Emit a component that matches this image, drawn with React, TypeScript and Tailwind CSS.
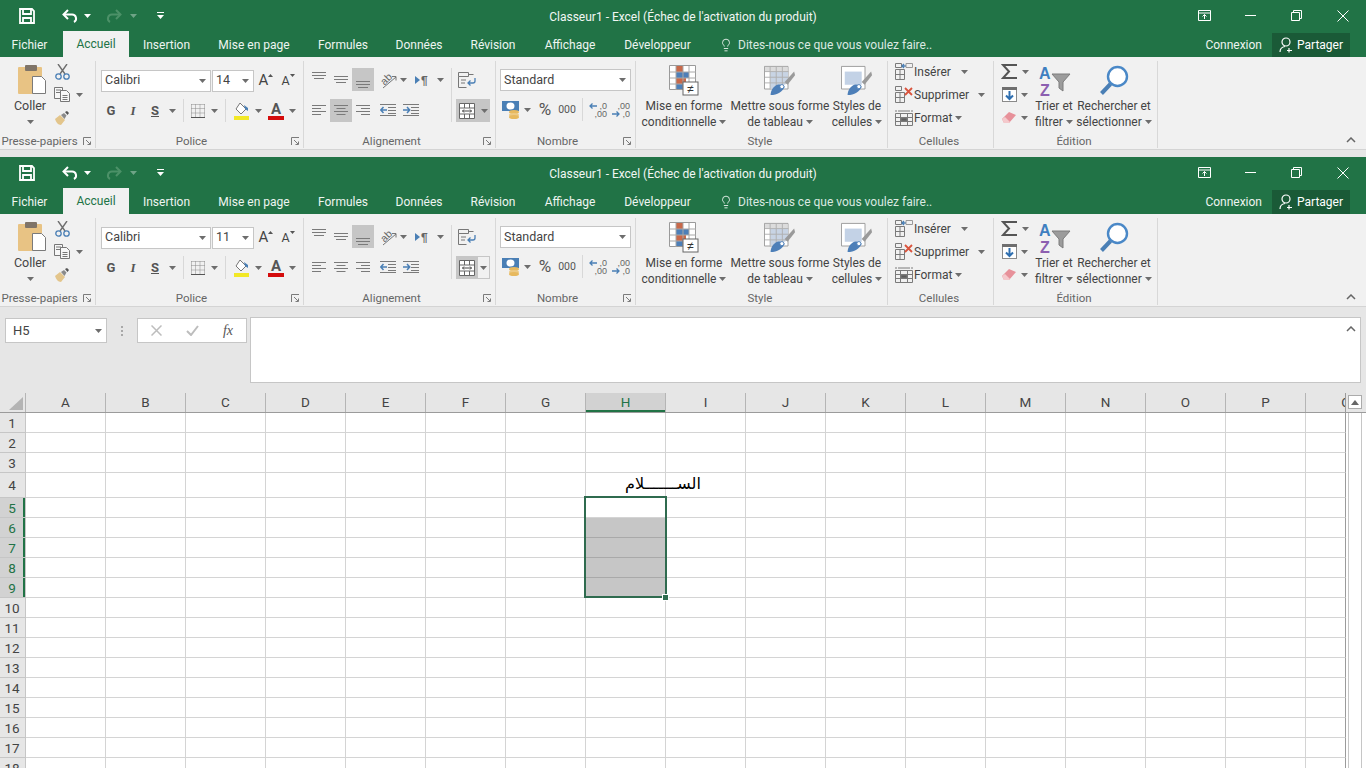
import { Lightbulb } from "lucide-react"
import type { ReactNode } from "react"

const BLUE = "#4a7fb5"

const Caret = ({ className = "" }: { className?: string }) => (
  <svg width="7" height="4" viewBox="0 0 7 4" className={`shrink-0 ${className}`}>
    <path d="M0 0h7L3.5 4z" fill="#6d6d6d" />
  </svg>
)

const WhiteCaret = ({ className = "", opacity = 1 }: { className?: string; opacity?: number }) => (
  <svg width="7" height="4" viewBox="0 0 7 4" className={className} opacity={opacity}>
    <path d="M0 0h7L3.5 4z" fill="#ffffff" />
  </svg>
)

// fixed width slot so ribbon controls line up
function Slot({ w, children, active }: { w: string; children?: ReactNode; active?: boolean }) {
  return <div className={`flex items-center justify-center h-[23px] shrink-0 ${w} ${active ? "bg-[#c6c6c6]" : ""}`}>{children}</div>
}

const Sep = ({ className = "" }: { className?: string }) => <div className={`w-px h-[23px] bg-[#d8d8d8] shrink-0 ${className}`} />

const Launcher = () => (
  <svg width="9" height="9" viewBox="0 0 9 9" className="absolute right-[3px] bottom-[2px]" fill="none" stroke="#7b7b7b">
    <path d="M.5 8V.5H8" />
    <path d="M3 3l4 4M7.5 4.5v3h-3" />
  </svg>
)

function Group({ w, label, launcher, children }: { w: string; label: string; launcher?: boolean; children: ReactNode }) {
  return (
    <div className={`relative flex flex-col h-[87px] mt-[4px] border-r border-[#d8d8d8] shrink-0 ${w}`}>
      <div className="flex-1 min-h-0">{children}</div>
      <div className={`h-[14px] leading-[14px] text-center text-[11.5px] text-[#666666] whitespace-nowrap ${launcher ? "pr-[16px]" : "pr-[3px]"}`}>{label}</div>
      {launcher && <Launcher />}
    </div>
  )
}

function Combo({ w, text, className = "" }: { w: string; text: string; className?: string }) {
  return (
    <div className={`flex items-center justify-between h-[22px] bg-white border border-[#c6c6c6] pl-[3px] pr-[4px] text-[12.5px] text-[#444444] shrink-0 ${w} ${className}`}>
      <span>{text}</span>
      <Caret />
    </div>
  )
}

function BigButton({ w, icon, line1, line2 }: { w: string; icon: ReactNode; line1: string; line2: string }) {
  return (
    <div className={`flex flex-col items-center shrink-0 text-[12px] leading-[16px] text-[#444444] whitespace-nowrap ${w}`}>
      <div className="h-[33px] mt-[4px] flex items-start justify-center">{icon}</div>
      <div>{line1}</div>
      <div className="flex items-center gap-[3px]">{line2}<Caret /></div>
    </div>
  )
}

/* ---- quick access + window icons ---- */

const SaveIcon = () => (
  <svg width="16" height="16" viewBox="0 0 16 16" fill="none" stroke="#ffffff" strokeWidth="1.8">
    <path d="M1 1h12l2 2v12H1z" />
    <path d="M4 1v5h8V1M4 15v-5h8v5" />
  </svg>
)
const UndoIcon = () => (
  <svg width="16" height="14" viewBox="0 0 16 14" fill="none" stroke="#ffffff" strokeWidth="2">
    <path d="M6 1L1.5 5.5 6 10" />
    <path d="M2 5.5h8a4 4 0 0 1 2 7.5" />
  </svg>
)
const RedoIcon = () => (
  <svg width="16" height="14" viewBox="0 0 16 14" fill="none" stroke="#4c9168" strokeWidth="2">
    <path d="M10 1l4.5 4.5L10 10" />
    <path d="M14 5.5H6a4 4 0 0 0-2 7.5" />
  </svg>
)
const CustomizeIcon = () => (
  <svg width="7" height="7" viewBox="0 0 7 7">
    <path d="M0 0h7v1H0zM0 3h7L3.500 7z" fill="#ffffff" />
  </svg>
)
const WinRibbon = () => (
  <svg width="13" height="11" viewBox="0 0 13 11" fill="none" stroke="#fff">
    <path d="M.5.500h12v10H.5zM.5 3h12" />
    <path d="M6.500 9V4.500M4.500 6.500l2-2 2 2" />
  </svg>
)
const WinRestore = () => (
  <svg width="11" height="11" viewBox="0 0 11 11" fill="none" stroke="#fff">
    <path d="M.5 2.500h8v8h-8zM2.500 2.500v-2h8v8h-2" />
  </svg>
)
const WinClose = () => (
  <svg width="12" height="12" viewBox="0 0 12 12" stroke="#fff">
    <path d="M.5.500l11 11M11.500.500l-11 11" />
  </svg>
)
const PersonIcon = () => (
  <svg width="15" height="16" viewBox="0 0 15 16" fill="none" stroke="#fff" strokeWidth="1.2">
    <circle cx="7" cy="5" r="4" />
    <path d="M1 15c0-3 2-5 5-5.500M10 11v4.500M8 13.500h5" />
  </svg>
)

/* ---- clipboard ---- */

const PasteIcon = () => (
  <svg width="30" height="30" viewBox="0 0 30 30">
    <rect x="1" y="2" width="24" height="27" rx="1" fill="#e8c384" />
    <rect x="8" y="0" width="12" height="6" rx="1" fill="#7f7468" />
    <path d="M15.500 11.500h9l4 4v13h-13z" fill="#ffffff" stroke="#7a7a7a" />
  </svg>
)
const ScissorsIcon = () => (
  <svg width="15" height="16" viewBox="0 0 15 16" fill="none">
    <path d="M3 0l7 10M12 0L5 10" stroke="#6f6f6f" strokeWidth="1.4" />
    <circle cx="3.500" cy="12.500" r="2.700" stroke={BLUE} strokeWidth="1.300" />
    <circle cx="11.500" cy="12.500" r="2.700" stroke={BLUE} strokeWidth="1.300" />
  </svg>
)
const CopyIcon = () => (
  <svg width="16" height="15" viewBox="0 0 16 15" fill="#f7f7f7" stroke="#777">
    <path d="M.5.500h8v11h-8z" />
    <path d="M6.500 3.500h6l3 3v8h-9z" />
    <path d="M2 3h5M2 5.500h4M8.500 8.500h5M8.500 10.500h5M8.500 12.500h5" fill="none" />
  </svg>
)
const BrushIcon = () => (
  <svg width="16" height="14" viewBox="0 0 16 14">
    <path d="M1 8l5-4 5 5-4 5c-3 0-5-3-6-6z" fill="#e3c58b" />
    <path d="M7 4l3-2 2.500 2.500L10.500 8z" fill="#8a8a8a" />
    <path d="M11 1l2-1 2 2-1.500 2z" fill="#555" />
  </svg>
)

/* ---- font ---- */

const BordersIcon = () => (
  <svg width="14" height="14" viewBox="0 0 14 14" fill="none" stroke="#8b8b8b" strokeDasharray="1 1">
    <path d="M.5.500h13M.5 4.500h13M.5 9h13M.5.500v13M4.500.500v13M9 .500v13M13.500.500v13" />
    <path d="M0 13.500h14" strokeDasharray="none" stroke="#555" />
  </svg>
)
const FillIcon = () => (
  <svg width="18" height="18" viewBox="0 0 18 18">
    <path d="M7 1l6 6-5 5-5-5z" fill="#fff" stroke="#777" />
    <path d="M11 3l4 3v3l-3-2z" fill={BLUE} />
    <rect x="1" y="14" width="15" height="4" fill="#f2e826" />
  </svg>
)

/* ---- alignment ---- */

const VAlign = ({ y }: { y: number }) => (
  <svg width="14" height="18" viewBox="0 0 14 18" stroke="#7a7a7a">
    <path d={`M0 ${y + 0.5}h14M0 ${y + 3.5}h14M2 ${y + 6.5}h10`} />
  </svg>
)
const HAlign = ({ a }: { a: "l" | "c" | "r" }) => {
  const d = a === "l" ? "M0 .5h14M0 3.500h9M0 6.500h14M0 9.500h9" : a === "c" ? "M0 .5h14M2.500 3.500h9M0 6.500h14M2.500 9.500h9" : "M0 .5h14M5 3.500h9M0 6.500h14M5 9.500h9"
  return (
    <svg width="14" height="10" viewBox="0 0 14 10" stroke="#7a7a7a" className="mb-[2px]">
      <path d={d} />
    </svg>
  )
}
const IndentIcon = ({ out }: { out?: boolean }) => (
  <svg width="16" height="12" viewBox="0 0 16 12" fill="none" className="mb-[2px]">
    <path d="M0 .5h16M8 3.500h8M8 6.500h8M8 9.500h8M0 11.500h16" stroke="#7a7a7a" />
    {out ? <path d="M7 6H1M3.500 3L.8 6l2.700 3" stroke={BLUE} strokeWidth="1.500" /> : <path d="M0 6h6M4 3l2.700 3L4 9" stroke={BLUE} strokeWidth="1.500" />}
  </svg>
)
const OrientIcon = () => (
  <svg width="20" height="18" viewBox="0 0 20 18" fill="none" className="overflow-visible">
    <text x="3" y="12" fontSize="10.5" fontFamily="Liberation Sans, sans-serif" fill="#666" transform="rotate(-45 8 9)">ab</text>
    <path d="M5 17L18 6M14 5.500h4v4" stroke="#777" />
  </svg>
)
const ParagraphIcon = () => (
  <svg width="18" height="12" viewBox="0 0 18 12">
    <path d="M0 2l5 4-5 4z" fill={BLUE} />
    <text x="6" y="10.500" fontSize="12" fontWeight="700" fontFamily="Liberation Sans, sans-serif" fill="#666">¶</text>
  </svg>
)
const WrapIcon = () => (
  <svg width="18" height="16" viewBox="0 0 18 16" fill="none" stroke="#777">
    <path d="M.5.500h10v4H.5zM.5 4.500v11h8M3 8h5M3 11h4M10.500 2.500h5" />
    <path d="M17 6v3a2 2 0 0 1-2 2h-5M12.500 8.500L10 11l2.500 2.500" stroke={BLUE} strokeWidth="1.300" />
  </svg>
)
const MergeIcon = () => (
  <svg width="16" height="16" viewBox="0 0 16 16" fill="#ffffff" stroke="#666">
    <path d="M.5.500h15v15H.5z" />
    <path d="M.5 5h15M.5 11h15M5.500.500V5M10.500.500V5M5.500 11v4.500M10.500 11v4.500" />
    <path d="M3.500 8h9M5 6.500L3.500 8 5 9.500M11 6.500L12.500 8 11 9.500" fill="none" stroke="#444" />
  </svg>
)

/* ---- number ---- */

const AccountingIcon = () => (
  <svg width="20" height="18" viewBox="0 0 20 18">
    <rect x="0" y="0" width="17" height="10" fill={BLUE} />
    <ellipse cx="8.500" cy="5" rx="4" ry="3.500" fill="#fff" />
    <ellipse cx="12" cy="11" rx="5" ry="2" fill="#e7b95e" />
    <ellipse cx="12" cy="14" rx="5" ry="2" fill="#edca85" />
    <ellipse cx="12" cy="16" rx="5" ry="2" fill="#e7b95e" />
  </svg>
)
const DecimalLines = ({ top, bottom }: { top: string; bottom: string }) => (
  <div className="flex flex-col items-end font-['Liberation_Sans',sans-serif] text-[9px] leading-[8px] text-[#666666]">
    <span>{top}</span>
    <span>{bottom}</span>
  </div>
)
const DecimalIcon = ({ more }: { more?: boolean }) => (
  <div className="relative flex justify-end w-[18px]">
    {more ? <DecimalLines top=",00" bottom=",0" /> : <DecimalLines top=",0" bottom=",00" />}
    <svg width="8" height="6" viewBox="0 0 8 6" fill="none" stroke={BLUE} strokeWidth="1.300" className={`absolute left-0 ${more ? "bottom-[1px]" : "top-[1px]"}`}>
      <path d={more ? "M0 3h7M4.500.5L7 3 4.500 5.500" : "M8 3H1M3.500.5L1 3l2.500 2.500"} />
    </svg>
  </div>
)

/* ---- style ---- */

const CondFormatIcon = () => (
  <svg width="30" height="31" viewBox="0 0 30 31">
    <path d="M.5.500h26v24H.5z" fill="#fff" stroke="#9a9a9a" />
    <rect x="7" y="1" width="7" height="6" fill="#c8694a" />
    <rect x="7" y="7" width="13" height="6" fill="#4d7fb8" />
    <rect x="7" y="13" width="10" height="6" fill="#c8694a" />
    <rect x="7" y="19" width="7" height="5" fill="#4d7fb8" />
    <path d="M7 1v24M14 1v24M20 1v24M1 7h26M1 13h26M1 19h26" stroke="#a8a8a8" fill="none" />
    <rect x="14" y="17" width="15" height="13" fill="#fff" stroke="#666" />
    <text x="21.500" y="28" fontSize="12" textAnchor="middle" fontFamily="Liberation Sans, sans-serif" fill="#333">≠</text>
  </svg>
)
const BrushStroke = () => (
  <>
    <path d="M32 6L22 17l3 3L33 10z" fill="#9a9a9a" />
    <path d="M7 31c0-5 3-9 7-11 3-1 6 0 8 2-2 5-8 9-15 9z" fill="#4d7fb8" />
    <circle cx="19" cy="22" r="2.200" fill="#fff" stroke="#4d7fb8" />
  </>
)
const TableStyleIcon = () => (
  <svg width="32" height="32" viewBox="0 0 34 32">
    <path d="M.5.500h25v24H.5z" fill="#fff" stroke="#9a9a9a" />
    <rect x="1" y="1" width="24" height="5" fill="#dcdcdc" />
    <path d="M6.500 6h19v12L14 24H6.500z" fill="#c8d4e4" />
    <path d="M6.500 1v24M13 1v24M19.500 1v24M1 6h25M1 12h25M1 18h25" stroke="#b0b0b0" fill="none" />
    <BrushStroke />
  </svg>
)
const CellStyleIcon = () => (
  <svg width="32" height="32" viewBox="0 0 34 32">
    <path d="M.5.500h25v24H.5z" fill="#fff" stroke="#9a9a9a" />
    <rect x="4" y="6" width="18" height="14" fill="#c3d2e6" />
    <BrushStroke />
  </svg>
)

/* ---- cells ---- */

const CellsBase = ({ children }: { children?: ReactNode }) => (
  <svg width="18" height="17" viewBox="0 0 18 17" fill="none" stroke="#7a7a7a">
    <path d="M.5 6.500h9v10h-9zM5 6.500v10M.5 11.500h9" />
    {children}
  </svg>
)
const InsertIcon = () => (
  <CellsBase>
    <path d="M.5.500h6v4h-6z" />
    <path d="M11 3H7M9 1L7 3l2 2" stroke={BLUE} strokeWidth="1.300" />
    <path d="M11 .5h6.500v4H11z" stroke="#999" />
  </CellsBase>
)
const DeleteIcon = () => (
  <CellsBase>
    <path d="M.5.500h6v4h-6z" />
    <path d="M10 2l7 7M17 2l-7 7" stroke="#d9543d" strokeWidth="1.800" />
  </CellsBase>
)
const FormatIcon = () => (
  <svg width="18" height="17" viewBox="0 0 18 17" fill="none" stroke="#7a7a7a">
    <path d="M.5 4.500h17v12H.5zM5.500 4.500v12M12.500 4.500v12M.5 8.500h17M.5 12.500h17" />
    <rect x="6" y="9" width="6" height="3" fill="#5d5d5d" />
    <path d="M1 1v2M17 1v2M3 2h12" />
  </svg>
)

/* ---- edit ---- */

const SigmaIcon = () => (
  <svg width="16" height="15" viewBox="0 0 16 15" fill="none" stroke="#555" strokeWidth="2">
    <path d="M15 2V1H2l6 6.500L2 14h13v-1" />
  </svg>
)
const FillDownIcon = () => (
  <svg width="15" height="15" viewBox="0 0 15 15">
    <rect x=".5" y=".5" width="14" height="14" fill="#fff" stroke="#8a8a8a" />
    <rect x="0" y="0" width="15" height="3" fill="#6e6e6e" />
    <path d="M7.500 4v8M4 8.500L7.500 12 11 8.500" fill="none" stroke="#2f6fb0" strokeWidth="2" />
  </svg>
)
const EraserIcon = () => (
  <svg width="16" height="13" viewBox="0 0 16 13">
    <path d="M1 8l7-7 7 3-7 8H3z" fill="#e7919a" />
    <path d="M1 8l2 4h5l1-1-5-5z" fill="#f4c9cc" />
  </svg>
)
const SortFilterIcon = () => (
  <svg width="33" height="33" viewBox="0 0 33 33" fontFamily="Liberation Sans, sans-serif" fontWeight="700" fontSize="16">
    <text x="1" y="14" fill="#3f7fc0">A</text>
    <text x="2" y="31" fill="#8c5fb0">Z</text>
    <path d="M14 9h18l-7 8v9l-4-3v-6z" fill="#9c9c9c" stroke="#7d7d7d" />
  </svg>
)
const SearchIcon = () => (
  <svg width="30" height="32" viewBox="0 0 30 32" fill="none">
    <circle cx="18.500" cy="11.500" r="9.500" stroke="#4a88c7" strokeWidth="2.400" fill="#fff" />
    <path d="M11.500 19L2.500 28.500" stroke="#4a7fb5" strokeWidth="4" />
  </svg>
)

const TABS = [
  { label: "Insertion", w: "w-[75px]" },
  { label: "Mise en page", w: "w-[100px]" },
  { label: "Formules", w: "w-[78px]" },
  { label: "Données", w: "w-[74px]" },
  { label: "Révision", w: "w-[74px]" },
  { label: "Affichage", w: "w-[80px]" },
  { label: "Développeur", w: "w-[95px]" },
]

function ExcelWindow({ size, centerActive, mergeFull, strip }: { size: string; centerActive?: boolean; mergeFull?: boolean; strip?: boolean }) {
  return (
    <div className="w-[1366px]">
      {/* title bar */}
      <div className="flex items-center h-[31px] bg-[#217346]">
        <div className="flex items-center w-[196px]">
          <Slot w="w-[54px]"><SaveIcon /></Slot>
          <div className="ml-[8px] flex"><UndoIcon /></div>
          <WhiteCaret className="ml-[6px]" />
          <div className="ml-[15px] flex"><RedoIcon /></div>
          <WhiteCaret className="ml-[8px]" opacity={0.35} />
          <div className="ml-[20px] flex"><CustomizeIcon /></div>
        </div>
        <div className="flex-1 pt-[3px] text-center text-[12px] text-[#f2f7f4] whitespace-nowrap">Classeur1 - Excel (Échec de l'activation du produit)</div>
        <div className="flex items-center justify-end w-[196px]">
          <Slot w="w-[46px]"><WinRibbon /></Slot>
          <Slot w="w-[46px]"><div className="w-[11px] h-px bg-white" /></Slot>
          <Slot w="w-[46px]"><WinRestore /></Slot>
          <Slot w="w-[47px]"><WinClose /></Slot>
        </div>
      </div>

      {/* tabs */}
      <div className="flex items-stretch h-[26px] bg-[#217346] text-[12px] text-[#eef5f1] whitespace-nowrap">
        <div className="w-[59px] text-center leading-[29px]">Fichier</div>
        <div className="w-[4px]" />
        <div className="w-[66px] text-center leading-[27px] bg-[#f1f1f1] text-[#217346]">Accueil</div>
        {TABS.map((t) => (
          <div key={t.label} className={`${t.w} text-center leading-[28px]`}>{t.label}</div>
        ))}
        <div className="w-[14px]" />
        <div className="flex items-center gap-[5px] text-[#dbe9e1] h-[27px]">
          <Lightbulb size={14} strokeWidth={1.4} color="#ffffff" />
          <span>Dites-nous ce que vous voulez faire..</span>
        </div>
        <div className="flex-1" />
        <div className="leading-[28px]">Connexion</div>
        <div className="flex items-center gap-[3px] w-[78px] ml-[10px] mr-[16px] mt-[2px] pl-[7px] bg-[#1a5a37] text-white">
          <PersonIcon />
          <span>Partager</span>
        </div>
      </div>

      {/* ribbon */}
      <div className="flex h-[93px] bg-[#f1f1f1] border-b border-[#d4d4d4] text-[#444444]">
        <Group w="w-[96px]" label="Presse-papiers" launcher>
          <div className="flex">
            <div className="flex flex-col items-center w-[40px] ml-[10px] text-[12.5px] leading-[16px]">
              <div className="mt-[4px] h-[33px] ml-[4px]"><PasteIcon /></div>
              <div>Coller</div>
              <Caret className="mt-[6px]" />
            </div>
            <div className="flex flex-col -mt-[1px] ml-[2px]">
              <Slot w="w-[20px]"><ScissorsIcon /></Slot>
              <div className="flex items-center h-[23px]">
                <Slot w="w-[20px]"><CopyIcon /></Slot>
                <Caret className="ml-[4px]" />
              </div>
              <Slot w="w-[20px]"><BrushIcon /></Slot>
            </div>
          </div>
        </Group>

        <Group w="w-[208px]" label="Police" launcher>
          <div className="flex items-center mt-[8px] ml-[5px]">
            <Combo w="w-[110px]" text="Calibri" />
            <Combo w="w-[42px]" text={size} className="ml-px" />
            <Slot w="w-[22px] ml-px">
              <span className="text-[15px] leading-none">A</span>
              <svg width="5" height="3" viewBox="0 0 5 3" className="self-center -mt-[10px]"><path d="M0 3h5L2.500 0z" fill="#555" /></svg>
            </Slot>
            <Slot w="w-[22px]">
              <span className="text-[12.5px] leading-none mt-[2px]">A</span>
              <svg width="5" height="3" viewBox="0 0 5 3" className="self-center -mt-[10px]"><path d="M0 0h5L2.500 3z" fill="#555" /></svg>
            </Slot>
          </div>
          <div className="flex items-center mt-[7px] ml-[4px] text-[13px] text-[#555555]">
            <Slot w="w-[22px]"><span className="font-bold">G</span></Slot>
            <Slot w="w-[22px]"><span className="font-bold italic font-['Liberation_Serif',serif]">I</span></Slot>
            <Slot w="w-[22px]"><span className="font-bold underline">S</span></Slot>
            <Slot w="w-[12px]"><Caret /></Slot>
            <Sep className="ml-[5px]" />
            <Slot w="w-[20px] ml-[4px]"><BordersIcon /></Slot>
            <Slot w="w-[12px]"><Caret /></Slot>
            <Sep className="ml-[5px]" />
            <Slot w="w-[20px] ml-[6px]"><FillIcon /></Slot>
            <Slot w="w-[12px]"><Caret /></Slot>
            <Slot w="w-[20px] ml-[2px]">
              <div className="flex flex-col items-center">
                <span className="text-[15px] leading-[14px] font-bold text-[#555555]">A</span>
                <div className="w-[16px] h-[4px] bg-[#d40c0c]" />
              </div>
            </Slot>
            <Slot w="w-[12px]"><Caret /></Slot>
          </div>
        </Group>

        <Group w="w-[192px]" label="Alignement" launcher>
          <div className="flex ml-[4px] mt-[7px]">
            <div className="w-[143px]">
              <div className="flex items-center">
                <Slot w="w-[22px]"><VAlign y={1} /></Slot>
                <Slot w="w-[22px]"><VAlign y={5} /></Slot>
                <Slot w="w-[22px]" active><VAlign y={10} /></Slot>
                <Slot w="w-[20px] ml-[4px]"><OrientIcon /></Slot>
                <Slot w="w-[10px]"><Caret /></Slot>
                <Slot w="w-[20px] ml-[6px]"><ParagraphIcon /></Slot>
                <Slot w="w-[10px] ml-px"><Caret /></Slot>
              </div>
              <div className="flex items-center mt-[8px]">
                <Slot w="w-[22px]"><HAlign a="l" /></Slot>
                <Slot w="w-[22px]" active={centerActive}><HAlign a="c" /></Slot>
                <Slot w="w-[22px]"><HAlign a="r" /></Slot>
                <Slot w="w-[23px] ml-[2px]"><IndentIcon out /></Slot>
                <Slot w="w-[23px]"><IndentIcon /></Slot>
              </div>
            </div>
            <div className="w-px h-[54px] bg-[#d8d8d8]" />
            <div className="ml-[4px]">
              <Slot w="w-[22px]"><WrapIcon /></Slot>
              <div className="flex mt-[8px]">
                <Slot w="w-[22px]" active><MergeIcon /></Slot>
                <div className={`flex items-center justify-center w-[12px] h-[23px] ${mergeFull ? "bg-[#c6c6c6]" : "border border-l-0 border-[#c6c6c6]"}`}>
                  <Caret />
                </div>
              </div>
            </div>
          </div>
        </Group>

        <Group w="w-[140px]" label="Nombre" launcher>
          <Combo w="w-[131px]" text="Standard" className="mt-[8px] ml-[4px]" />
          <div className="flex items-center mt-[7px] ml-[6px] text-[#555555]">
            <Slot w="w-[20px]"><AccountingIcon /></Slot>
            <Slot w="w-[10px]"><Caret /></Slot>
            <Slot w="w-[20px] ml-[3px]"><span className="text-[17px]">%</span></Slot>
            <Slot w="w-[22px] ml-px"><span className="text-[10.5px]">000</span></Slot>
            <Sep className="ml-[4px]" />
            <Slot w="w-[18px] ml-[6px]"><DecimalIcon /></Slot>
            <Slot w="w-[18px] ml-[5px]"><DecimalIcon more /></Slot>
          </div>
        </Group>

        <Group w="w-[252px]" label="Style">
          <div className="flex ml-[2px]">
            <BigButton w="w-[92px]" icon={<CondFormatIcon />} line1="Mise en forme" line2="conditionnelle" />
            <BigButton w="w-[100px]" icon={<TableStyleIcon />} line1="Mettre sous forme" line2="de tableau" />
            <BigButton w="w-[54px]" icon={<CellStyleIcon />} line1="Styles de" line2="cellules" />
          </div>
        </Group>

        <Group w="w-[106px]" label="Cellules">
          <div className="flex flex-col -mt-[1px] ml-[7px] text-[12px]">
            <div className="flex items-center h-[23px] gap-[1px]"><InsertIcon /><span>Insérer</span><Caret className="ml-[9px]" /></div>
            <div className="flex items-center h-[23px] gap-[1px]"><DeleteIcon /><span>Supprimer</span><Caret className="ml-[8px]" /></div>
            <div className="flex items-center h-[23px] gap-[1px]"><FormatIcon /><span>Format</span><Caret className="ml-[2px]" /></div>
          </div>
        </Group>

        <Group w="w-[164px]" label="Édition">
          <div className="flex">
            <div className="flex flex-col -mt-[1px] ml-[6px] w-[32px]">
              <div className="flex items-center h-[23px]"><Slot w="w-[18px]"><SigmaIcon /></Slot><Caret className="ml-[4px]" /></div>
              <div className="flex items-center h-[23px]"><Slot w="w-[18px]"><FillDownIcon /></Slot><Caret className="ml-[3px]" /></div>
              <div className="flex items-center h-[23px]"><Slot w="w-[18px]"><EraserIcon /></Slot><Caret className="ml-[3px]" /></div>
            </div>
            <BigButton w="w-[44px]" icon={<SortFilterIcon />} line1="Trier et" line2="filtrer" />
            <BigButton w="w-[76px]" icon={<SearchIcon />} line1="Rechercher et" line2="sélectionner" />
          </div>
        </Group>

        <div className="flex flex-1 justify-end items-end pr-[10px] pb-[6px]">
          <svg width="10" height="6" viewBox="0 0 10 6" fill="none" stroke="#666" strokeWidth="1.5"><path d="M1 5l4-4 4 4" /></svg>
        </div>
      </div>
      {strip && <div className="h-[7px] bg-[#e6e6e6]" />}
    </div>
  )
}

function FormulaBar() {
  return (
    <div className="flex h-[86px] bg-[#e6e6e6] pt-[11px] pl-[5px]">
      <div className="flex items-center justify-between w-[102px] h-[25px] bg-white border border-[#c6c6c6] pl-[7px] pr-[4px] text-[13px] text-[#444444]">
        <span>H5</span>
        <Caret />
      </div>
      <div className="flex flex-col gap-[2px] items-center justify-center w-[30px] h-[25px]">
        <div className="w-[2px] h-[2px] bg-[#a8a8a8]" />
        <div className="w-[2px] h-[2px] bg-[#a8a8a8]" />
        <div className="w-[2px] h-[2px] bg-[#a8a8a8]" />
      </div>
      <div className="flex items-center w-[110px] h-[25px] bg-white border border-[#c6c6c6]">
        <div className="w-[37px] flex justify-center">
          <svg width="11" height="11" viewBox="0 0 11 11" stroke="#bdbdbd" strokeWidth="1.5"><path d="M.5.500l10 10M10.500.500l-10 10" /></svg>
        </div>
        <div className="w-[35px] flex justify-center">
          <svg width="13" height="11" viewBox="0 0 13 11" fill="none" stroke="#bdbdbd" strokeWidth="2"><path d="M1 6l4 4 7-9" /></svg>
        </div>
        <div className="w-[36px] text-center text-[14px] italic text-[#555555] font-['Liberation_Serif',serif]">fx</div>
      </div>
      <div className="flex justify-end w-[1111px] h-[66px] ml-[3px] -mt-px bg-white border border-[#c6c6c6] pt-[8px] pr-[4px]">
        <svg width="10" height="6" viewBox="0 0 10 6" fill="none" stroke="#666" strokeWidth="1.5"><path d="M1 5l4-4 4 4" /></svg>
      </div>
    </div>
  )
}

const COLS = "ABCDEFGHIJKLMNOP".split("")
const ROWS = Array.from({ length: 18 }, (_, i) => i + 1)

function Sheet() {
  return (
    <div className="relative h-[375px] overflow-hidden bg-white text-[13.5px] text-[#444444]">
      {/* column headers */}
      <div className="flex h-[20px] bg-[#e6e6e6] border-b border-[#9b9b9b]">
        <div className="flex items-end justify-end w-[26px] pr-[2px] pb-[2px] border-r border-[#b5b5b5]">
          <svg width="14" height="13" viewBox="0 0 14 13"><path d="M14 0v13H0z" fill="#b4b4b4" /></svg>
        </div>
        {COLS.map((c) => (
          <div
            key={c}
            className={`w-[80px] text-center leading-[19px] border-r border-[#b5b5b5] ${c === "H" ? "bg-[#d2d2d2] text-[#217346] shadow-[inset_0_-2px_0_#217346]" : ""}`}
          >
            {c}
          </div>
        ))}
        <div className="w-[40px] overflow-hidden border-r border-[#9b9b9b]">
          <div className="w-[80px] text-center leading-[19px]">Q</div>
        </div>
        <div className="flex-1 pl-[2px] pt-[2px]">
          <div className="flex items-center justify-center w-[14px] h-[14px] bg-white border border-[#ababab]">
            <svg width="8" height="5" viewBox="0 0 8 5"><path d="M0 5h8L4 0z" fill="#666" /></svg>
          </div>
        </div>
      </div>

      {/* rows */}
      {ROWS.map((r) => {
        const selected = r >= 5 && r <= 9
        return (
          <div key={r} className={`flex ${r === 4 ? "h-[25px]" : "h-[20px]"}`}>
            <div
              className={`w-[26px] flex items-center justify-center pt-px pr-px border-b border-r border-[#c6c6c6] ${selected ? "bg-[#d2d2d2] text-[#217346] shadow-[inset_-2px_0_0_#217346]" : "bg-[#e6e6e6]"}`}
            >
              {r}
            </div>
            {COLS.map((c) => (
              <div
                key={c}
                className={`w-[80px] border-b border-r ${c === "H" && r >= 6 && r <= 9 ? "bg-[#c6c6c6] border-[#a9a9a9]" : "border-[#d4d4d4]"}`}
              >
                {c === "H" && r === 4 && (
                  <div dir="rtl" className="w-[120px] ml-[39px] text-left text-[16px] leading-[21px] text-black whitespace-nowrap font-['DejaVu_Sans',sans-serif]">
                    الســـــــلام
                  </div>
                )}
              </div>
            ))}
            <div className="w-[40px] border-b border-r border-[#d4d4d4] border-r-[#9b9b9b]" />
            <div className="w-[2px]" />
            <div className="w-[14px] border-x border-[#c6c6c6]" />
          </div>
        )
      })}

      {/* selection */}
      <div className="absolute left-[584px] top-[103px] w-[83px] h-[102px] border-2 border-[#2f6b4f]">
        <div className="absolute -right-[3px] -bottom-[4px] w-[5px] h-[5px] bg-[#2f6b4f] outline outline-1 outline-white" />
      </div>
    </div>
  )
}

export default function App() {
  return (
    <div className="w-[1366px] h-[768px] overflow-hidden bg-white font-['Roboto',sans-serif]">
      <ExcelWindow size="14" centerActive mergeFull strip />
      <ExcelWindow size="11" />
      <FormulaBar />
      <Sheet />
    </div>
  )
}
